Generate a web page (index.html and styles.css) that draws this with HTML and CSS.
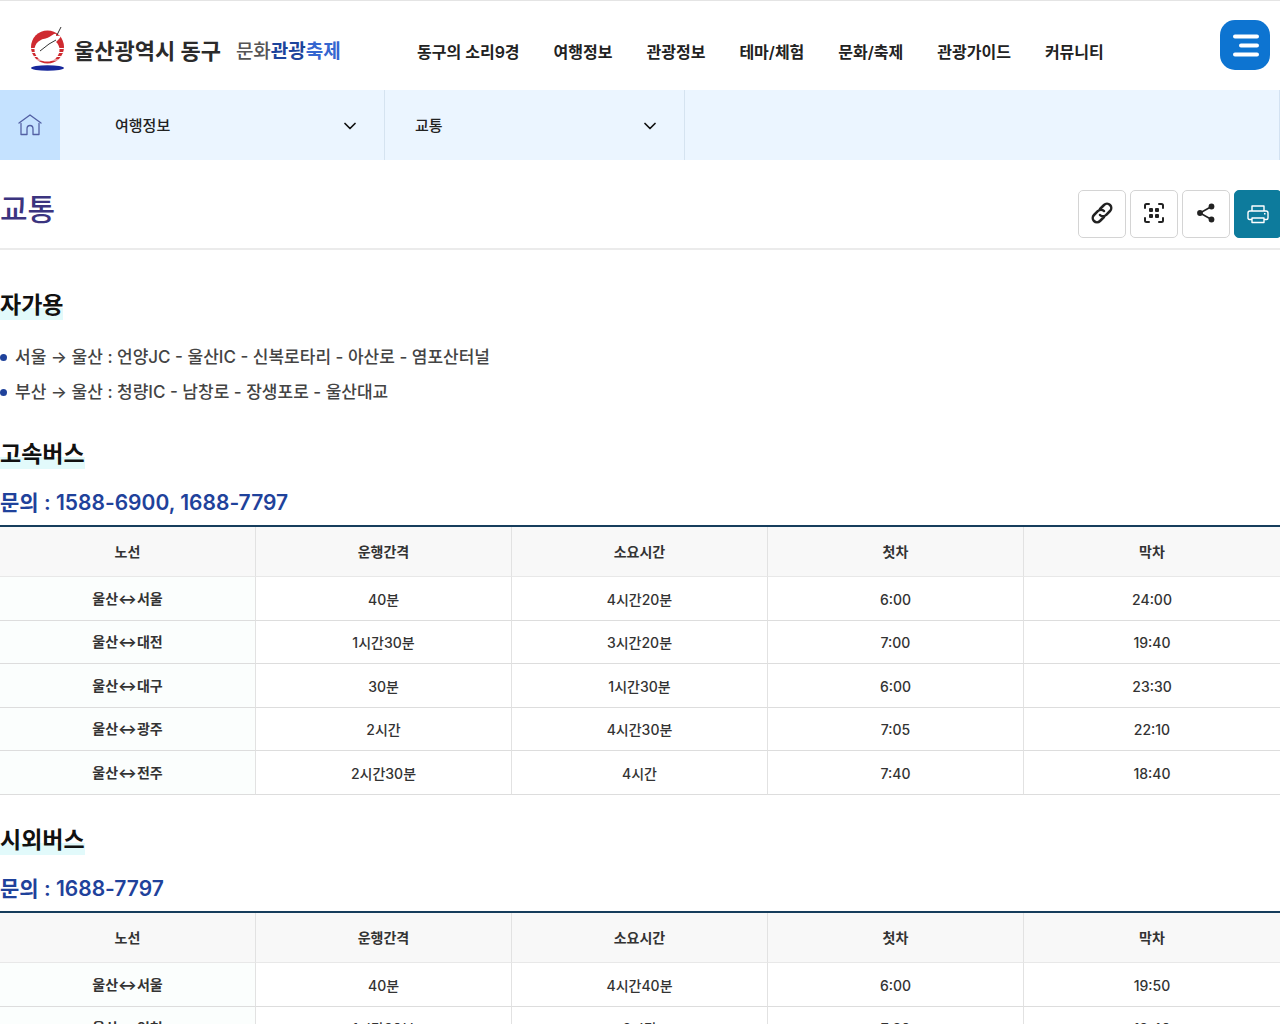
FILE: index.html
```html
<!DOCTYPE html>
<html lang="ko">
<head>
<meta charset="utf-8">
<meta name="viewport" content="width=device-width, initial-scale=1">
<title>교통 - 울산광역시 동구 문화관광축제</title>
<link rel="stylesheet" href="styles.css">
</head>
<body>
<header class="header">
  <a class="logo" href="#">
    <svg class="logo-mark" viewBox="0 0 36 46" aria-hidden="true">
      <defs><clipPath id="sun"><circle cx="18.500" cy="21" r="16.500"/></clipPath></defs>
      <g clip-path="url(#sun)">
        <rect width="36" height="46" fill="#cf2a30"/>
        <path d="M0 22.500h36M0 26.500h36M0 30.500h36M0 34h36" stroke="#fff" stroke-width="1"/>
      </g>
      <ellipse cx="18" cy="24" rx="12.500" ry="11.500" fill="#fff"/>
      <path d="M14 14Q21 11 25 8Q28 7 27 10Q34 9 30 13L25 18Z" fill="#fff"/>
      <path d="M11 25L20 18L27 14M28 9L32 1" stroke="#333" fill="none"/>
      <ellipse cx="18.500" cy="42" rx="16.500" ry="2.800" fill="#17279b"/>
    </svg>
    <strong class="logo-name">울산광역시 동구</strong>
    <span class="logo-sub">문화<span class="logo-blue">관광</span><span class="logo-sky">축제</span></span>
  </a>
  <nav class="nav" aria-label="주메뉴">
    <a href="#">동구의 소리9경</a>
    <a href="#">여행정보</a>
    <a href="#">관광정보</a>
    <a href="#">테마/체험</a>
    <a href="#">문화/축제</a>
    <a href="#">관광가이드</a>
    <a href="#">커뮤니티</a>
  </nav>
  <button class="menu" type="button" aria-label="전체메뉴">
    <svg width="26" height="24" viewBox="0 0 26 24" fill="none" stroke="#fff" stroke-width="4" stroke-linecap="round" aria-hidden="true"><path d="M2 3.500h22M8 12.500h16M2 21.500h22"/></svg>
  </button>
</header>

<nav class="crumbs" aria-label="현재 위치">
  <a class="home" href="#" aria-label="홈">
    <svg width="24" height="22" viewBox="0 0 24 22" fill="none" stroke="#5360a4" stroke-width="1.300" stroke-linecap="round" stroke-linejoin="round" aria-hidden="true"><path d="M1 9L12 1L23 9M3 9.500V20.500H9V15Q9 11.500 12 11.500T15 15V20.500H21V9.500"/></svg>
  </a>
  <button class="crumb crumb-first" type="button">여행정보
    <svg width="12" height="8" viewBox="0 0 12 8" fill="none" stroke="#111" stroke-width="1.700" stroke-linecap="round" stroke-linejoin="round" aria-hidden="true"><path d="M1 1.500L6 6.500L11 1.500"/></svg>
  </button>
  <button class="crumb" type="button">교통
    <svg width="12" height="8" viewBox="0 0 12 8" fill="none" stroke="#111" stroke-width="1.700" stroke-linecap="round" stroke-linejoin="round" aria-hidden="true"><path d="M1 1.500L6 6.500L11 1.500"/></svg>
  </button>
</nav>

<main>
  <div class="title-bar">
    <h1>교통</h1>
    <div class="tools">
      <button type="button" class="tool" aria-label="주소 복사">
        <svg width="22" height="22" viewBox="0 0 22 22" fill="none" stroke="#222" stroke-width="2.500" stroke-linecap="round" aria-hidden="true"><path d="M9 7L13 3A4 4 0 0 1 19 9L15 13A4 4 0 0 1 9 13M13 15L9 19A4 4 0 0 1 3 13L7 9A4 4 0 0 1 13 9"/></svg>
      </button>
      <button type="button" class="tool" aria-label="QR 코드">
        <svg width="22" height="22" viewBox="0 0 22 22" fill="#222" aria-hidden="true"><path d="M2 6V3.500Q2 2 3.500 2H6M16 2H18.500Q20 2 20 3.500V6M20 16V18.500Q20 20 18.500 20H16M6 20H3.500Q2 20 2 18.500V16" fill="none" stroke="#222" stroke-width="2" stroke-linecap="round"/><rect x="6" y="6" width="4" height="4" rx="1"/><rect x="12" y="6" width="4" height="4" rx="1"/><rect x="6" y="12" width="4" height="4" rx="1"/><rect x="12" y="12" width="4" height="4" rx="1"/></svg>
      </button>
      <button type="button" class="tool" aria-label="공유">
        <svg width="20" height="20" viewBox="0 0 20 20" fill="#222" aria-hidden="true"><path d="M15.500 3.500L4 10L15.500 16.500" fill="none" stroke="#222" stroke-width="1.600"/><circle cx="15.500" cy="3.500" r="2.900"/><circle cx="4" cy="10" r="2.900"/><circle cx="15.500" cy="16.500" r="2.900"/></svg>
      </button>
      <button type="button" class="tool tool-print" aria-label="인쇄">
        <svg width="22" height="20" viewBox="0 0 22 20" fill="none" stroke="#fff" stroke-width="1.400" stroke-linejoin="round" aria-hidden="true"><path d="M5 7V2H17V7M5 15.500H2.500Q1 15.500 1 14V9Q1 7 3 7H19Q21 7 21 9V14Q21 15.500 19.500 15.500H17M5 14H17V18.500H5ZM17 9.800H18.500"/></svg>
      </button>
    </div>
  </div>

  <section class="first">
    <h2><span>자가용</span></h2>
    <ul class="routes">
      <li>서울 → 울산 : 언양JC - 울산IC - 신복로타리 - 아산로 - 염포산터널</li>
      <li>부산 → 울산 : 청량IC - 남창로 - 장생포로 - 울산대교</li>
    </ul>
  </section>

  <section>
    <h2><span>고속버스</span></h2>
    <h3>문의 : 1588-6900, 1688-7797</h3>
    <table>
      <thead><tr><th scope="col">노선</th><th scope="col">운행간격</th><th scope="col">소요시간</th><th scope="col">첫차</th><th scope="col">막차</th></tr></thead>
      <tbody>
        <tr><th scope="row">울산↔서울</th><td>40분</td><td>4시간20분</td><td>6:00</td><td>24:00</td></tr>
        <tr><th scope="row">울산↔대전</th><td>1시간30분</td><td>3시간20분</td><td>7:00</td><td>19:40</td></tr>
        <tr><th scope="row">울산↔대구</th><td>30분</td><td>1시간30분</td><td>6:00</td><td>23:30</td></tr>
        <tr><th scope="row">울산↔광주</th><td>2시간</td><td>4시간30분</td><td>7:05</td><td>22:10</td></tr>
        <tr><th scope="row">울산↔전주</th><td>2시간30분</td><td>4시간</td><td>7:40</td><td>18:40</td></tr>
      </tbody>
    </table>
  </section>

  <section>
    <h2><span>시외버스</span></h2>
    <h3>문의 : 1688-7797</h3>
    <table>
      <thead><tr><th scope="col">노선</th><th scope="col">운행간격</th><th scope="col">소요시간</th><th scope="col">첫차</th><th scope="col">막차</th></tr></thead>
      <tbody>
        <tr><th scope="row">울산↔서울</th><td>40분</td><td>4시간40분</td><td>6:00</td><td>19:50</td></tr>
        <tr><th scope="row">울산↔인천</th><td>1시간30분</td><td>6시간</td><td>7:30</td><td>18:40</td></tr>
      </tbody>
    </table>
  </section>
</main>
</body>
</html>
```
FILE: styles.css
```css
* { box-sizing: border-box; }

body {
  margin: 0;
  color: #333;
  background: #fff;
  font-family: Inter, "Noto Sans CJK KR", sans-serif;
  font-size: 16px;
}

a { color: inherit; text-decoration: none; }
button { font: inherit; color: inherit; cursor: pointer; }
svg { display: block; }

.header {
  display: flex;
  align-items: center;
  height: 90px;
  padding: 0 10px 1px 29px;
  border-top: 1px solid #e4e4e4;
}

.logo { display: flex; align-items: center; flex: 0 0 388px; padding-top: 8px; }
.logo-mark { width: 36px; height: 46px; margin-right: 9px; }
.logo-name { margin-right: 15px; color: #2b2b2b; font-size: 22px; font-weight: 700; }
.logo-sub { color: #555; font-size: 19px; font-weight: 500; }
.logo-blue { color: #1c449c; font-weight: 700; }
.logo-sky { color: #3566d0; font-weight: 700; }

.nav {
  display: flex;
  gap: 34px;
  margin-right: auto;
  padding-top: 12px;
  color: #222;
  font-weight: 600;
  white-space: nowrap;
}

.menu {
  display: grid;
  place-items: center;
  width: 50px;
  height: 50px;
  padding: 0 0 0 2px;
  border: 0;
  border-radius: 15px;
  background: #0d74d1;
}

.crumbs { display: flex; height: 70px; background: #ebf5ff; border-right: 1px solid #d3e2f2; }
.home { display: grid; place-items: center; width: 60px; background: #c5e2ff; }

.crumb {
  display: flex;
  align-items: center;
  justify-content: space-between;
  width: 300px;
  padding: 0 28px 2px 30px;
  border: 0;
  border-right: 1px solid #d5e3f0;
  background: none;
  color: #222;
  font-size: 15px;
  font-weight: 500;
}
.crumb svg { margin-top: 4px; }
.crumb-first { width: 325px; padding-left: 55px; }

.title-bar {
  display: flex;
  justify-content: space-between;
  align-items: flex-start;
  height: 90px;
  padding-top: 30px;
  border-bottom: 2px solid #ebebeb;
}
h1 { margin: 0; color: #3b347f; font-size: 30px; font-weight: 500; line-height: 38px; }

.tools { display: flex; gap: 4px; margin-right: -2px; overflow: hidden; }
.tool {
  display: grid;
  place-items: center;
  width: 48px;
  height: 48px;
  padding: 0 0 2px;
  border: 1px solid #d4d4d4;
  border-radius: 5px;
  background: #fff;
}
.tool-print { padding-bottom: 0; border-color: #0d7b9c; background: #0d7b9c; }

main { overflow: hidden; }
section { padding-top: 29px; }
.first { padding-top: 40px; }
h2 { margin: 0; color: #111; font-size: 23px; font-weight: 600; line-height: 30px; }
h2 span { display: inline-block; background: linear-gradient(transparent 60%, #e2fafb 60%); }
h3 { margin: 17px 0 0; color: #1f429b; font-size: 21px; font-weight: 600; line-height: 34px; }

.routes { margin: 20px 0 0; padding: 0; list-style: none; color: #444; font-size: 17px; font-weight: 500; line-height: 35px; }
.routes li { display: flex; align-items: center; gap: 8px; }
.routes li::before { content: ""; width: 7px; height: 7px; border-radius: 50%; background: #1f429b; }

table {
  width: 100%;
  margin-top: 5px;
  margin-bottom: 1px;
  border-top: 2px solid #163d5c;
  border-collapse: separate;
  border-spacing: 0;
  table-layout: fixed;
  color: #333;
  font-size: 14px;
  line-height: 20px;
  text-align: center;
}
th, td { height: 44px; padding: 0; border-right: 1px solid #e2e2e2; border-bottom: 1px solid #ddd; font-weight: 500; }
td { padding-top: 2px; }
tbody tr:nth-child(even) > * { height: 43px; }
tr > :last-child { border-right: 0; }
thead th { height: 50px; border-bottom-color: #e8e8e8; background: #f8f8f8; font-weight: 700; }
tbody th { background: #fbfefd; font-weight: 700; }
```
